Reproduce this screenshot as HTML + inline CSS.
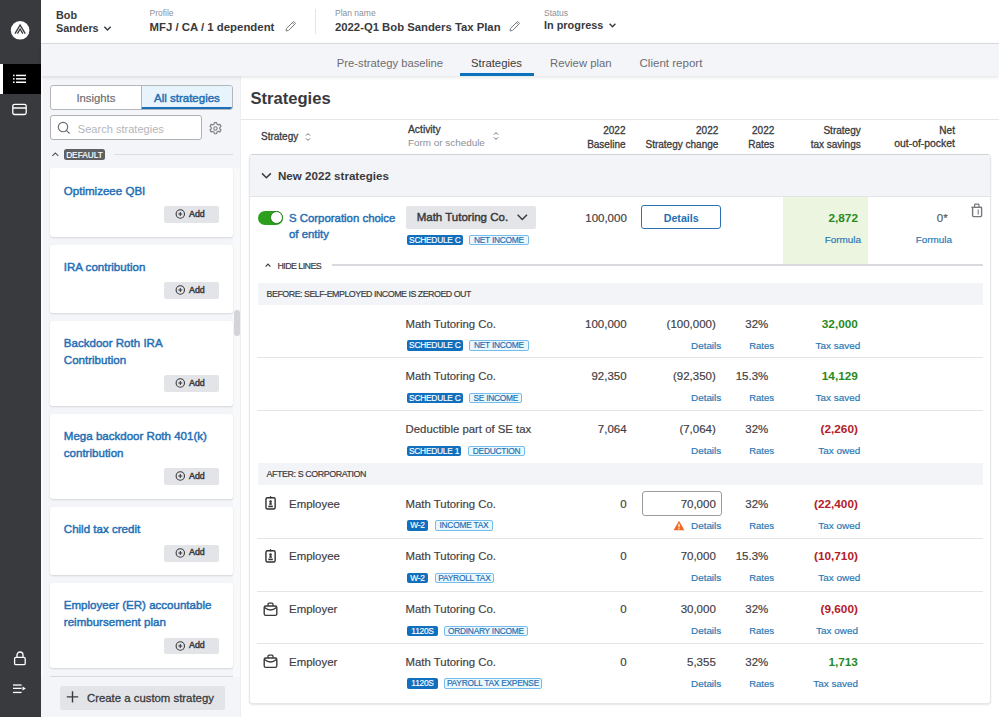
<!DOCTYPE html>
<html><head><meta charset="utf-8"><style>
html,body{margin:0;padding:0;}
body{width:999px;height:717px;overflow:hidden;position:relative;font-family:"Liberation Sans", sans-serif;}
svg{display:block;overflow:visible}
</style></head><body>
<div style="position:absolute;left:0px;top:0px;width:999px;height:717px;background:#ffffff;"></div>
<div style="position:absolute;left:0px;top:0px;width:41px;height:717px;background:#393a3d;"></div>
<svg style="position:absolute;left:10px;top:20px;" width="21" height="21" viewBox="0 0 21 21"><circle cx="10.1" cy="10.3" r="9.3" fill="#fff"/><path d="M5 13.6 L10.1 5 L15.2 13.6" fill="none" stroke="#393a3d" stroke-width="1.4"/><path d="M7.4 13.6 L10.1 9 L12.8 13.6" fill="none" stroke="#393a3d" stroke-width="1.3"/></svg>
<div style="position:absolute;left:0px;top:64px;width:41px;height:30px;background:#000;"></div>
<div style="position:absolute;left:0px;top:64px;width:3px;height:30px;background:#fff;"></div>
<svg style="position:absolute;left:12px;top:73px;" width="16" height="12" viewBox="0 0 16 12"><rect x="1" y="1.7" width="1.6" height="1.5" fill="#fff"/><rect x="4" y="1.7" width="10" height="1.5" fill="#fff"/><rect x="1" y="5.1" width="1.6" height="1.5" fill="#fff"/><rect x="4" y="5.1" width="10" height="1.5" fill="#fff"/><rect x="1" y="8.5" width="1.6" height="1.5" fill="#fff"/><rect x="4" y="8.5" width="10" height="1.5" fill="#fff"/></svg>
<svg style="position:absolute;left:11px;top:102px;" width="18" height="15" viewBox="0 0 18 15"><rect x="1.8" y="2.3" width="13.4" height="10.2" rx="1.8" fill="none" stroke="#fff" stroke-width="1.3"/><path d="M2 6 H15" stroke="#fff" stroke-width="1.5"/></svg>
<svg style="position:absolute;left:11px;top:648px;" width="18" height="20" viewBox="0 0 18 20"><path d="M6 9.5 V7 a3 3 0 0 1 6 0 V9.5" fill="none" stroke="#fff" stroke-width="1.3"/><rect x="3.6" y="9.4" width="10.6" height="7.3" rx="1.3" fill="none" stroke="#fff" stroke-width="1.3"/></svg>
<svg style="position:absolute;left:11px;top:682px;" width="18" height="14" viewBox="0 0 18 14"><rect x="2" y="2.4" width="8.6" height="1.3" fill="#fff"/><rect x="2" y="5.7" width="8.6" height="1.3" fill="#fff"/><rect x="2" y="9.8" width="8.6" height="1.3" fill="#fff"/><path d="M11.5 4.6 L14.8 6.6 L11.5 8.6 Z" fill="#fff"/></svg>
<div style="position:absolute;left:41px;top:43px;width:958px;height:1px;background:#dfe0e3;"></div>
<div style="position:absolute;left:56px;top:9.66px;font-size:10.8px;line-height:10.8px;font-weight:700;color:#393a3d;white-space:nowrap;">Bob</div>
<div style="position:absolute;left:56px;top:22.86px;font-size:10.8px;line-height:10.8px;font-weight:700;color:#393a3d;white-space:nowrap;">Sanders</div>
<svg style="position:absolute;left:102px;top:24px;" width="11" height="9" viewBox="0 0 11 9"><path d="M2.3 2.8 L5.5 6 L8.7 2.8" fill="none" stroke="#393a3d" stroke-width="1.4"/></svg>
<div style="position:absolute;left:149.5px;top:9.40px;font-size:8.5px;line-height:8.5px;font-weight:400;color:#8d9096;white-space:nowrap;">Profile</div>
<div style="position:absolute;left:149.5px;top:21.55px;font-size:11.4px;line-height:11.4px;font-weight:700;color:#393a3d;white-space:nowrap;">MFJ / CA / 1 dependent</div>
<svg style="position:absolute;left:284px;top:19px;" width="14" height="14" viewBox="0 0 14 14"><path d="M2 12 L2.6 9.4 L9.6 2.4 L11.6 4.4 L4.6 11.4 Z" fill="none" stroke="#76787d" stroke-width="0.95" stroke-linejoin="round"/><path d="M8.4 3.6 L10.4 5.6" stroke="#76787d" stroke-width="0.95"/></svg>
<div style="position:absolute;left:315px;top:9px;width:1px;height:25px;background:#e3e4e7;"></div>
<div style="position:absolute;left:335px;top:9.40px;font-size:8.5px;line-height:8.5px;font-weight:400;color:#8d9096;white-space:nowrap;">Plan name</div>
<div style="position:absolute;left:335px;top:21.63px;font-size:11.3px;line-height:11.3px;font-weight:700;color:#393a3d;white-space:nowrap;">2022-Q1 Bob Sanders Tax Plan</div>
<svg style="position:absolute;left:508px;top:19px;" width="14" height="14" viewBox="0 0 14 14"><path d="M2 12 L2.6 9.4 L9.6 2.4 L11.6 4.4 L4.6 11.4 Z" fill="none" stroke="#76787d" stroke-width="0.95" stroke-linejoin="round"/><path d="M8.4 3.6 L10.4 5.6" stroke="#76787d" stroke-width="0.95"/></svg>
<div style="position:absolute;left:544px;top:9.00px;font-size:8.5px;line-height:8.5px;font-weight:400;color:#8d9096;white-space:nowrap;">Status</div>
<div style="position:absolute;left:544px;top:19.97px;font-size:10.9px;line-height:10.9px;font-weight:700;color:#393a3d;white-space:nowrap;">In progress</div>
<svg style="position:absolute;left:607px;top:21px;" width="11" height="9" viewBox="0 0 11 9"><path d="M2.6 2.8 L5.5 5.8 L8.4 2.8" fill="none" stroke="#393a3d" stroke-width="1.4"/></svg>
<div style="position:absolute;left:41px;top:44px;width:958px;height:32px;background:#f4f5f8;box-shadow:0 1px 4px rgba(0,0,0,0.13);z-index:1"></div>
<div style="position:absolute;left:0;top:0;width:999px;height:76px;z-index:2">
<div style="position:absolute;left:336.8px;top:57.78px;font-size:11.25px;line-height:11.25px;font-weight:400;color:#6b6c72;white-space:nowrap;">Pre-strategy baseline</div>
<div style="position:absolute;left:471px;top:57.73px;font-size:11.3px;line-height:11.3px;font-weight:400;color:#393a3d;white-space:nowrap;">Strategies</div>
<div style="position:absolute;left:550px;top:57.73px;font-size:11.3px;line-height:11.3px;font-weight:400;color:#6b6c72;white-space:nowrap;">Review plan</div>
<div style="position:absolute;left:639.5px;top:57.52px;font-size:11.55px;line-height:11.55px;font-weight:400;color:#6b6c72;white-space:nowrap;">Client report</div>
<div style="position:absolute;left:460px;top:73px;width:73.5px;height:3px;background:#0d72bd;"></div>
</div>
<div style="position:absolute;left:41px;top:76px;width:200px;height:641px;background:#f4f5f8;"></div>
<div style="position:absolute;left:41px;top:76px;width:1.5px;height:641px;background:#fbfbfc;"></div>
<div style="position:absolute;left:233.4px;top:168px;width:6.8px;height:509px;background:#f8f9fa;"></div>
<div style="position:absolute;left:240.4px;top:76px;width:1px;height:641px;background:#eceef1;"></div>
<div style="position:absolute;left:50px;top:85px;width:183px;height:24.6px;background:#fff;border:1px solid #b3b6bb;border-radius:3px;box-sizing:border-box"></div>
<div style="position:absolute;left:140.6px;top:86px;width:91.4px;height:22.6px;background:#e8f4fb;border-left:1px solid #b3b6bb;border-bottom:2px solid #1b6fb6;box-sizing:border-box;border-radius:0 2px 2px 0"></div>
<div style="position:absolute;left:76.4px;top:93.03px;font-size:11.3px;line-height:11.3px;font-weight:400;color:#6b6c72;white-space:nowrap;-webkit-text-stroke:0.18px #6b6c72;">Insights</div>
<div style="position:absolute;left:154px;top:93.07px;font-size:11.5px;line-height:11.5px;font-weight:400;color:#1f6fb5;white-space:nowrap;-webkit-text-stroke:0.45px #1f6fb5;">All strategies</div>
<div style="position:absolute;left:50px;top:115px;width:152px;height:25.2px;background:#fff;border:1px solid #aeb1b6;border-radius:3px;box-sizing:border-box"></div>
<svg style="position:absolute;left:56px;top:120px;" width="16" height="16" viewBox="0 0 16 16"><circle cx="7" cy="7" r="4.7" fill="none" stroke="#6b6c72" stroke-width="1.15"/><path d="M10.4 10.4 L13.6 13.6" stroke="#6b6c72" stroke-width="1.3"/></svg>
<div style="position:absolute;left:77.8px;top:123.83px;font-size:11.07px;line-height:11.07px;font-weight:400;color:#b4b6bb;white-space:nowrap;">Search strategies</div>
<svg style="position:absolute;left:208px;top:121px;" width="15" height="15" viewBox="0 0 15 15"><circle cx="7.5" cy="7.5" r="1.7" fill="none" stroke="#7d7f84" stroke-width="1.1"/><path d="M6.4 1.6 h2.2 l0.4 1.6 l1.3 0.7 l1.6-0.5 l1.1 1.9 l-1.2 1.1 v1.5 l1.2 1.1 l-1.1 1.9 l-1.6-0.5 l-1.3 0.7 l-0.4 1.6 h-2.2 l-0.4-1.6 l-1.3-0.7 l-1.6 0.5 l-1.1-1.9 l1.2-1.1 v-1.5 l-1.2-1.1 l1.1-1.9 l1.6 0.5 l1.3-0.7 Z" fill="none" stroke="#7d7f84" stroke-width="1.15" stroke-linejoin="round"/></svg>
<svg style="position:absolute;left:50px;top:150px;" width="10" height="8" viewBox="0 0 10 8"><path d="M2.3 5.9 L5.3 3 L8.3 5.9" fill="none" stroke="#55575c" stroke-width="1.1"/></svg>
<div style="position:absolute;left:64px;top:149.2px;width:41px;height:10.6px;background:#5f6065;border-radius:2.5px"></div>
<div style="position:absolute;left:84.5px;top:150.97px;font-size:8.3px;line-height:8.3px;font-weight:400;color:#fff;white-space:nowrap;-webkit-text-stroke:0.18px #fff;transform:translateX(-50%)">DEFAULT</div>
<div style="position:absolute;left:113.6px;top:153.8px;width:119.2px;height:1px;background:#dcdde1;"></div>
<div style="position:absolute;left:50px;top:168px;width:183px;height:69px;background:#fff;border-radius:3px;box-shadow:0 1px 2px rgba(0,0,0,0.13)"></div>
<div style="position:absolute;left:63.8px;top:185.62px;font-size:11.55px;line-height:11.55px;font-weight:400;color:#1f6fb5;white-space:nowrap;-webkit-text-stroke:0.45px #1f6fb5;">Optimizeee QBI</div>
<div style="position:absolute;left:164.2px;top:206.3px;width:54.5px;height:16.8px;background:#e3e4e8;border-radius:2px"></div>
<svg style="position:absolute;left:175px;top:209.3px;" width="11" height="11" viewBox="0 0 11 11"><circle cx="5.3" cy="5" r="4.2" fill="none" stroke="#393a3d" stroke-width="1.1"/><path d="M5.3 3 V7 M3.3 5 H7.3" stroke="#393a3d" stroke-width="1.1"/></svg>
<div style="position:absolute;left:189px;top:209.67px;font-size:8.9px;line-height:8.9px;font-weight:400;color:#393a3d;white-space:nowrap;-webkit-text-stroke:0.45px #393a3d;">Add</div>
<div style="position:absolute;left:50px;top:245px;width:183px;height:68px;background:#fff;border-radius:3px;box-shadow:0 1px 2px rgba(0,0,0,0.13)"></div>
<div style="position:absolute;left:63.8px;top:261.62px;font-size:11.55px;line-height:11.55px;font-weight:400;color:#1f6fb5;white-space:nowrap;-webkit-text-stroke:0.45px #1f6fb5;">IRA contribution</div>
<div style="position:absolute;left:164.2px;top:282.3px;width:54.5px;height:16.8px;background:#e3e4e8;border-radius:2px"></div>
<svg style="position:absolute;left:175px;top:285.3px;" width="11" height="11" viewBox="0 0 11 11"><circle cx="5.3" cy="5" r="4.2" fill="none" stroke="#393a3d" stroke-width="1.1"/><path d="M5.3 3 V7 M3.3 5 H7.3" stroke="#393a3d" stroke-width="1.1"/></svg>
<div style="position:absolute;left:189px;top:285.67px;font-size:8.9px;line-height:8.9px;font-weight:400;color:#393a3d;white-space:nowrap;-webkit-text-stroke:0.45px #393a3d;">Add</div>
<div style="position:absolute;left:50px;top:321px;width:183px;height:85px;background:#fff;border-radius:3px;box-shadow:0 1px 2px rgba(0,0,0,0.13)"></div>
<div style="position:absolute;left:63.8px;top:338.22px;font-size:11.55px;line-height:11.55px;font-weight:400;color:#1f6fb5;white-space:nowrap;-webkit-text-stroke:0.45px #1f6fb5;">Backdoor Roth IRA</div>
<div style="position:absolute;left:63.8px;top:355.32px;font-size:11.55px;line-height:11.55px;font-weight:400;color:#1f6fb5;white-space:nowrap;-webkit-text-stroke:0.45px #1f6fb5;">Contribution</div>
<div style="position:absolute;left:164.2px;top:375.3px;width:54.5px;height:16.8px;background:#e3e4e8;border-radius:2px"></div>
<svg style="position:absolute;left:175px;top:378.3px;" width="11" height="11" viewBox="0 0 11 11"><circle cx="5.3" cy="5" r="4.2" fill="none" stroke="#393a3d" stroke-width="1.1"/><path d="M5.3 3 V7 M3.3 5 H7.3" stroke="#393a3d" stroke-width="1.1"/></svg>
<div style="position:absolute;left:189px;top:378.67px;font-size:8.9px;line-height:8.9px;font-weight:400;color:#393a3d;white-space:nowrap;-webkit-text-stroke:0.45px #393a3d;">Add</div>
<div style="position:absolute;left:50px;top:414px;width:183px;height:85px;background:#fff;border-radius:3px;box-shadow:0 1px 2px rgba(0,0,0,0.13)"></div>
<div style="position:absolute;left:63.8px;top:431.12px;font-size:11.55px;line-height:11.55px;font-weight:400;color:#1f6fb5;white-space:nowrap;-webkit-text-stroke:0.45px #1f6fb5;">Mega backdoor Roth 401(k)</div>
<div style="position:absolute;left:63.8px;top:448.22px;font-size:11.55px;line-height:11.55px;font-weight:400;color:#1f6fb5;white-space:nowrap;-webkit-text-stroke:0.45px #1f6fb5;">contribution</div>
<div style="position:absolute;left:164.2px;top:468.3px;width:54.5px;height:16.8px;background:#e3e4e8;border-radius:2px"></div>
<svg style="position:absolute;left:175px;top:471.3px;" width="11" height="11" viewBox="0 0 11 11"><circle cx="5.3" cy="5" r="4.2" fill="none" stroke="#393a3d" stroke-width="1.1"/><path d="M5.3 3 V7 M3.3 5 H7.3" stroke="#393a3d" stroke-width="1.1"/></svg>
<div style="position:absolute;left:189px;top:471.67px;font-size:8.9px;line-height:8.9px;font-weight:400;color:#393a3d;white-space:nowrap;-webkit-text-stroke:0.45px #393a3d;">Add</div>
<div style="position:absolute;left:50px;top:506.7px;width:183px;height:68.30000000000001px;background:#fff;border-radius:3px;box-shadow:0 1px 2px rgba(0,0,0,0.13)"></div>
<div style="position:absolute;left:63.8px;top:523.92px;font-size:11.55px;line-height:11.55px;font-weight:400;color:#1f6fb5;white-space:nowrap;-webkit-text-stroke:0.45px #1f6fb5;">Child tax credit</div>
<div style="position:absolute;left:164.2px;top:544.8px;width:54.5px;height:16.8px;background:#e3e4e8;border-radius:2px"></div>
<svg style="position:absolute;left:175px;top:547.8px;" width="11" height="11" viewBox="0 0 11 11"><circle cx="5.3" cy="5" r="4.2" fill="none" stroke="#393a3d" stroke-width="1.1"/><path d="M5.3 3 V7 M3.3 5 H7.3" stroke="#393a3d" stroke-width="1.1"/></svg>
<div style="position:absolute;left:189px;top:548.17px;font-size:8.9px;line-height:8.9px;font-weight:400;color:#393a3d;white-space:nowrap;-webkit-text-stroke:0.45px #393a3d;">Add</div>
<div style="position:absolute;left:50px;top:583.2px;width:183px;height:84.79999999999995px;background:#fff;border-radius:3px;box-shadow:0 1px 2px rgba(0,0,0,0.13)"></div>
<div style="position:absolute;left:63.8px;top:600.12px;font-size:11.55px;line-height:11.55px;font-weight:400;color:#1f6fb5;white-space:nowrap;-webkit-text-stroke:0.45px #1f6fb5;">Employeer (ER) accountable</div>
<div style="position:absolute;left:63.8px;top:617.22px;font-size:11.55px;line-height:11.55px;font-weight:400;color:#1f6fb5;white-space:nowrap;-webkit-text-stroke:0.45px #1f6fb5;">reimbursement plan</div>
<div style="position:absolute;left:164.2px;top:637.7px;width:54.5px;height:16.8px;background:#e3e4e8;border-radius:2px"></div>
<svg style="position:absolute;left:175px;top:640.7px;" width="11" height="11" viewBox="0 0 11 11"><circle cx="5.3" cy="5" r="4.2" fill="none" stroke="#393a3d" stroke-width="1.1"/><path d="M5.3 3 V7 M3.3 5 H7.3" stroke="#393a3d" stroke-width="1.1"/></svg>
<div style="position:absolute;left:189px;top:641.07px;font-size:8.9px;line-height:8.9px;font-weight:400;color:#393a3d;white-space:nowrap;-webkit-text-stroke:0.45px #393a3d;">Add</div>
<div style="position:absolute;left:50px;top:676px;width:183px;height:84px;background:#fff;border-radius:3px;box-shadow:0 1px 2px rgba(0,0,0,0.13)"></div>
<div style="position:absolute;left:63.8px;top:692.62px;font-size:11.55px;line-height:11.55px;font-weight:400;color:#1f6fb5;white-space:nowrap;-webkit-text-stroke:0.45px #1f6fb5;">Tax strategy</div>
<div style="position:absolute;left:164.2px;top:730px;width:54.5px;height:16.8px;background:#e3e4e8;border-radius:2px"></div>
<svg style="position:absolute;left:175px;top:733px;" width="11" height="11" viewBox="0 0 11 11"><circle cx="5.3" cy="5" r="4.2" fill="none" stroke="#393a3d" stroke-width="1.1"/><path d="M5.3 3 V7 M3.3 5 H7.3" stroke="#393a3d" stroke-width="1.1"/></svg>
<div style="position:absolute;left:189px;top:733.37px;font-size:8.9px;line-height:8.9px;font-weight:400;color:#393a3d;white-space:nowrap;-webkit-text-stroke:0.45px #393a3d;">Add</div>
<div style="position:absolute;left:234px;top:309.5px;width:6.4px;height:26.5px;background:#d2d4d8;border-radius:3px"></div>
<div style="position:absolute;left:41px;top:677px;width:199px;height:40px;background:#f4f5f8;"></div>
<div style="position:absolute;left:50px;top:676px;width:183px;height:1.3px;background:#d9dadf;"></div>
<div style="position:absolute;left:60px;top:685.5px;width:165px;height:24px;background:#e3e4e8;border-radius:2px"></div>
<svg style="position:absolute;left:65px;top:689px;" width="15" height="15" viewBox="0 0 15 15"><path d="M7.5 2.2 V13.6 M1.8 7.9 H13.2" stroke="#393a3d" stroke-width="1.4"/></svg>
<div style="position:absolute;left:87px;top:693.18px;font-size:11.36px;line-height:11.36px;font-weight:400;color:#393a3d;white-space:nowrap;-webkit-text-stroke:0.3px #393a3d;">Create a custom strategy</div>
<div style="position:absolute;left:250.4px;top:91.35px;font-size:16.6px;line-height:16.6px;font-weight:700;color:#393a3d;white-space:nowrap;">Strategies</div>
<div style="position:absolute;left:241px;top:118.5px;width:758px;height:1px;background:#e6e7ea;"></div>
<div style="position:absolute;left:261px;top:132.03px;font-size:10px;line-height:10px;font-weight:400;color:#393a3d;white-space:nowrap;-webkit-text-stroke:0.3px #393a3d;">Strategy</div>
<svg style="position:absolute;left:304px;top:132px;" width="8" height="10" viewBox="0 0 8 10"><path d="M2 3.6 L4 1.6 L6 3.6 M2 6.4 L4 8.4 L6 6.4" fill="none" stroke="#6b6c72" stroke-width="1"/></svg>
<div style="position:absolute;left:408px;top:124.78px;font-size:10.3px;line-height:10.3px;font-weight:400;color:#393a3d;white-space:nowrap;-webkit-text-stroke:0.3px #393a3d;">Activity</div>
<div style="position:absolute;left:408px;top:138.22px;font-size:9.9px;line-height:9.9px;font-weight:400;color:#8d9096;white-space:nowrap;">Form or schedule</div>
<svg style="position:absolute;left:492px;top:130.5px;" width="8" height="10" viewBox="0 0 8 10"><path d="M2 3.6 L4 1.6 L6 3.6 M2 6.4 L4 8.4 L6 6.4" fill="none" stroke="#6b6c72" stroke-width="1"/></svg>
<div style="position:absolute;right:373.5px;text-align:right;top:125.84px;font-size:10px;line-height:10px;font-weight:400;color:#393a3d;white-space:nowrap;-webkit-text-stroke:0.3px #393a3d;">2022</div>
<div style="position:absolute;right:373.5px;text-align:right;top:139.53px;font-size:10px;line-height:10px;font-weight:400;color:#393a3d;white-space:nowrap;-webkit-text-stroke:0.3px #393a3d;">Baseline</div>
<div style="position:absolute;right:280.70000000000005px;text-align:right;top:125.84px;font-size:10px;line-height:10px;font-weight:400;color:#393a3d;white-space:nowrap;-webkit-text-stroke:0.3px #393a3d;">2022</div>
<div style="position:absolute;right:280.70000000000005px;text-align:right;top:139.53px;font-size:10px;line-height:10px;font-weight:400;color:#393a3d;white-space:nowrap;-webkit-text-stroke:0.3px #393a3d;">Strategy change</div>
<div style="position:absolute;right:224.70000000000005px;text-align:right;top:125.84px;font-size:10px;line-height:10px;font-weight:400;color:#393a3d;white-space:nowrap;-webkit-text-stroke:0.3px #393a3d;">2022</div>
<div style="position:absolute;right:224.70000000000005px;text-align:right;top:139.53px;font-size:10px;line-height:10px;font-weight:400;color:#393a3d;white-space:nowrap;-webkit-text-stroke:0.3px #393a3d;">Rates</div>
<div style="position:absolute;right:138.29999999999995px;text-align:right;top:125.84px;font-size:10px;line-height:10px;font-weight:400;color:#393a3d;white-space:nowrap;-webkit-text-stroke:0.3px #393a3d;">Strategy</div>
<div style="position:absolute;right:138.29999999999995px;text-align:right;top:139.53px;font-size:10px;line-height:10px;font-weight:400;color:#393a3d;white-space:nowrap;-webkit-text-stroke:0.3px #393a3d;">tax savings</div>
<div style="position:absolute;right:44.10000000000002px;text-align:right;top:125.84px;font-size:10px;line-height:10px;font-weight:400;color:#393a3d;white-space:nowrap;-webkit-text-stroke:0.3px #393a3d;">Net</div>
<div style="position:absolute;right:44.10000000000002px;text-align:right;top:139.20px;font-size:10.4px;line-height:10.4px;font-weight:400;color:#393a3d;white-space:nowrap;-webkit-text-stroke:0.3px #393a3d;">out-of-pocket</div>
<div style="position:absolute;left:248.5px;top:153.8px;width:742.2px;height:549.9px;background:#fff;border:1px solid #e6e7ea;border-top:1.6px solid #d0d2d6;box-sizing:border-box;border-radius:4px;box-shadow:0 1px 2px rgba(0,0,0,0.10)"></div>
<div style="position:absolute;left:249.5px;top:155.4px;width:740.2px;height:41.2px;background:#f3f4f7;border-bottom:1px solid #e3e4e8;box-sizing:border-box"></div>
<svg style="position:absolute;left:260px;top:170px;" width="13" height="11" viewBox="0 0 13 11"><path d="M2 3.4 L6.4 7.8 L10.8 3.4" fill="none" stroke="#393a3d" stroke-width="1.5"/></svg>
<div style="position:absolute;left:278px;top:169.78px;font-size:11.6px;line-height:11.6px;font-weight:700;color:#393a3d;white-space:nowrap;">New 2022 strategies</div>
<div style="position:absolute;left:258px;top:210.5px;width:24.7px;height:14.2px;background:#2ca01c;border-radius:7.1px"></div>
<div style="position:absolute;left:269.6px;top:210.9px;width:13.2px;height:13.2px;border-radius:50%;background:#fff;border:1px solid #1e7a14;box-sizing:border-box"></div>
<div style="position:absolute;left:289px;top:212.95px;font-size:11.4px;line-height:11.4px;font-weight:400;color:#1f6fb5;white-space:nowrap;-webkit-text-stroke:0.45px #1f6fb5;">S Corporation choice</div>
<div style="position:absolute;left:289px;top:229.35px;font-size:11.4px;line-height:11.4px;font-weight:400;color:#1f6fb5;white-space:nowrap;-webkit-text-stroke:0.45px #1f6fb5;">of entity</div>
<div style="position:absolute;left:405.8px;top:205.5px;width:130px;height:23.7px;background:#e4e5e8;border-radius:2px"></div>
<div style="position:absolute;left:416.7px;top:212.27px;font-size:11.5px;line-height:11.5px;font-weight:400;color:#393a3d;white-space:nowrap;-webkit-text-stroke:0.45px #393a3d;">Math Tutoring Co.</div>
<svg style="position:absolute;left:515px;top:212px;" width="14" height="10" viewBox="0 0 14 10"><path d="M2.6 2.8 L7.3 7.5 L12 2.8" fill="none" stroke="#393a3d" stroke-width="1.5"/></svg>
<div style="position:absolute;left:406.7px;top:234.6px;width:56.3px;height:10.6px;box-sizing:border-box;border-radius:2px;background:#1070be;color:#fff;font-size:8.4px;letter-spacing:-0.25px;font-weight:400;-webkit-text-stroke:0.15px currentColor;line-height:10.6px;padding-top:0.6px;text-align:center;white-space:nowrap;display:flex;align-items:center;justify-content:center">SCHEDULE C</div>
<div style="position:absolute;left:469.29999999999995px;top:234.6px;width:59.3px;height:10.6px;box-sizing:border-box;border-radius:2px;background:#eaf7fd;color:#1c6cb0;border:1px solid #74bdea;font-size:8.4px;letter-spacing:-0.25px;font-weight:400;-webkit-text-stroke:0.15px currentColor;line-height:10.6px;padding-top:0.6px;text-align:center;white-space:nowrap;display:flex;align-items:center;justify-content:center">NET INCOME</div>
<div style="position:absolute;right:372.20000000000005px;text-align:right;top:213.07px;font-size:11.5px;line-height:11.5px;font-weight:400;color:#3f4044;white-space:nowrap;-webkit-text-stroke:0.18px #3f4044;">100,000</div>
<div style="position:absolute;left:641.3px;top:205.4px;width:80px;height:24.1px;background:#fff;border:1.5px solid #2b72b3;border-radius:3px;box-sizing:border-box"></div>
<div style="position:absolute;left:663.7px;top:212.54px;font-size:10.7px;line-height:10.7px;font-weight:700;color:#1f6fb5;white-space:nowrap;">Details</div>
<div style="position:absolute;left:782.8px;top:196.5px;width:85px;height:67.5px;background:#ebf5df;"></div>
<div style="position:absolute;right:141px;text-align:right;top:212.81px;font-size:11.8px;line-height:11.8px;font-weight:700;color:#2a8a22;white-space:nowrap;">2,872</div>
<div style="position:absolute;right:138px;text-align:right;top:234.62px;font-size:9.9px;line-height:9.9px;font-weight:400;color:#2a77b4;white-space:nowrap;-webkit-text-stroke:0.18px #2a77b4;">Formula</div>
<div style="position:absolute;right:51.39999999999998px;text-align:right;top:213.07px;font-size:11.5px;line-height:11.5px;font-weight:400;color:#55575c;white-space:nowrap;-webkit-text-stroke:0.18px #55575c;">0*</div>
<div style="position:absolute;right:47px;text-align:right;top:235.42px;font-size:9.9px;line-height:9.9px;font-weight:400;color:#2a77b4;white-space:nowrap;-webkit-text-stroke:0.18px #2a77b4;">Formula</div>
<svg style="position:absolute;left:969px;top:202px;" width="16" height="17" viewBox="0 0 16 17"><path d="M2.4 5.3 H13" stroke="#76787d" stroke-width="1.4"/><path d="M5.6 5 V3 a0.8 0.8 0 0 1 0.8-0.8 h2.8 a0.8 0.8 0 0 1 0.8 0.8 V5" fill="none" stroke="#76787d" stroke-width="1.2"/><path d="M3.6 5.4 V13.6 a1 1 0 0 0 1 1 h7 a1 1 0 0 0 1-1 V5.4" fill="none" stroke="#76787d" stroke-width="1.4"/><path d="M9.2 7.6 V12.4" stroke="#76787d" stroke-width="1.1"/></svg>
<svg style="position:absolute;left:263px;top:261px;" width="10" height="8" viewBox="0 0 10 8"><path d="M2.6 5.6 L5 3.2 L7.4 5.6" fill="none" stroke="#393a3d" stroke-width="1.2"/></svg>
<div style="position:absolute;left:277.4px;top:261.57px;font-size:8.9px;line-height:8.9px;font-weight:400;color:#393a3d;white-space:nowrap;-webkit-text-stroke:0.18px #393a3d;letter-spacing:-0.55px">HIDE LINES</div>
<div style="position:absolute;left:331.5px;top:264px;width:651px;height:2px;background:#d9dadd;"></div>
<div style="position:absolute;left:258px;top:283px;width:724.5px;height:22px;background:#f3f4f7;"></div>
<div style="position:absolute;left:266.6px;top:289.97px;font-size:8.9px;line-height:8.9px;font-weight:400;color:#393a3d;white-space:nowrap;-webkit-text-stroke:0.18px #393a3d;letter-spacing:-0.5px">BEFORE: SELF-EMPLOYED INCOME IS ZEROED OUT</div>
<div style="position:absolute;left:405.6px;top:318.98px;font-size:11.37px;line-height:11.37px;font-weight:400;color:#3f4044;white-space:nowrap;-webkit-text-stroke:0.18px #3f4044;">Math Tutoring Co.</div>
<div style="position:absolute;left:406.7px;top:340px;width:56.3px;height:10.6px;box-sizing:border-box;border-radius:2px;background:#1070be;color:#fff;font-size:8.4px;letter-spacing:-0.25px;font-weight:400;-webkit-text-stroke:0.15px currentColor;line-height:10.6px;padding-top:0.6px;text-align:center;white-space:nowrap;display:flex;align-items:center;justify-content:center">SCHEDULE C</div>
<div style="position:absolute;left:469.29999999999995px;top:340px;width:59.3px;height:10.6px;box-sizing:border-box;border-radius:2px;background:#eaf7fd;color:#1c6cb0;border:1px solid #74bdea;font-size:8.4px;letter-spacing:-0.25px;font-weight:400;-webkit-text-stroke:0.15px currentColor;line-height:10.6px;padding-top:0.6px;text-align:center;white-space:nowrap;display:flex;align-items:center;justify-content:center">NET INCOME</div>
<div style="position:absolute;right:372.4px;text-align:right;top:318.87px;font-size:11.5px;line-height:11.5px;font-weight:400;color:#3f4044;white-space:nowrap;-webkit-text-stroke:0.18px #3f4044;">100,000</div>
<div style="position:absolute;right:283.20000000000005px;text-align:right;top:318.87px;font-size:11.5px;line-height:11.5px;font-weight:400;color:#3f4044;white-space:nowrap;-webkit-text-stroke:0.18px #3f4044;">(100,000)</div>
<div style="position:absolute;right:277.79999999999995px;text-align:right;top:340.62px;font-size:9.9px;line-height:9.9px;font-weight:400;color:#2a77b4;white-space:nowrap;-webkit-text-stroke:0.18px #2a77b4;">Details</div>
<div style="position:absolute;right:230.70000000000005px;text-align:right;top:318.87px;font-size:11.5px;line-height:11.5px;font-weight:400;color:#3f4044;white-space:nowrap;-webkit-text-stroke:0.18px #3f4044;">32%</div>
<div style="position:absolute;right:225px;text-align:right;top:340.96px;font-size:9.5px;line-height:9.5px;font-weight:400;color:#2a77b4;white-space:nowrap;-webkit-text-stroke:0.18px #2a77b4;">Rates</div>
<div style="position:absolute;right:141.10000000000002px;text-align:right;top:318.61px;font-size:11.8px;line-height:11.8px;font-weight:700;color:#2a8a22;white-space:nowrap;">32,000</div>
<div style="position:absolute;right:138.70000000000005px;text-align:right;top:340.58px;font-size:9.95px;line-height:9.95px;font-weight:400;color:#2a77b4;white-space:nowrap;-webkit-text-stroke:0.18px #2a77b4;">Tax saved</div>
<div style="position:absolute;left:257px;top:357px;width:725.5px;height:1px;background:#e3e4e8;"></div>
<div style="position:absolute;left:405.6px;top:371.48px;font-size:11.37px;line-height:11.37px;font-weight:400;color:#3f4044;white-space:nowrap;-webkit-text-stroke:0.18px #3f4044;">Math Tutoring Co.</div>
<div style="position:absolute;left:406.7px;top:392.5px;width:56.3px;height:10.6px;box-sizing:border-box;border-radius:2px;background:#1070be;color:#fff;font-size:8.4px;letter-spacing:-0.25px;font-weight:400;-webkit-text-stroke:0.15px currentColor;line-height:10.6px;padding-top:0.6px;text-align:center;white-space:nowrap;display:flex;align-items:center;justify-content:center">SCHEDULE C</div>
<div style="position:absolute;left:469.29999999999995px;top:392.5px;width:53px;height:10.6px;box-sizing:border-box;border-radius:2px;background:#eaf7fd;color:#1c6cb0;border:1px solid #74bdea;font-size:8.4px;letter-spacing:-0.25px;font-weight:400;-webkit-text-stroke:0.15px currentColor;line-height:10.6px;padding-top:0.6px;text-align:center;white-space:nowrap;display:flex;align-items:center;justify-content:center">SE INCOME</div>
<div style="position:absolute;right:372.4px;text-align:right;top:371.37px;font-size:11.5px;line-height:11.5px;font-weight:400;color:#3f4044;white-space:nowrap;-webkit-text-stroke:0.18px #3f4044;">92,350</div>
<div style="position:absolute;right:283.20000000000005px;text-align:right;top:371.37px;font-size:11.5px;line-height:11.5px;font-weight:400;color:#3f4044;white-space:nowrap;-webkit-text-stroke:0.18px #3f4044;">(92,350)</div>
<div style="position:absolute;right:277.79999999999995px;text-align:right;top:393.12px;font-size:9.9px;line-height:9.9px;font-weight:400;color:#2a77b4;white-space:nowrap;-webkit-text-stroke:0.18px #2a77b4;">Details</div>
<div style="position:absolute;right:230.70000000000005px;text-align:right;top:371.37px;font-size:11.5px;line-height:11.5px;font-weight:400;color:#3f4044;white-space:nowrap;-webkit-text-stroke:0.18px #3f4044;">15.3%</div>
<div style="position:absolute;right:225px;text-align:right;top:393.46px;font-size:9.5px;line-height:9.5px;font-weight:400;color:#2a77b4;white-space:nowrap;-webkit-text-stroke:0.18px #2a77b4;">Rates</div>
<div style="position:absolute;right:141.10000000000002px;text-align:right;top:371.11px;font-size:11.8px;line-height:11.8px;font-weight:700;color:#2a8a22;white-space:nowrap;">14,129</div>
<div style="position:absolute;right:138.70000000000005px;text-align:right;top:393.08px;font-size:9.95px;line-height:9.95px;font-weight:400;color:#2a77b4;white-space:nowrap;-webkit-text-stroke:0.18px #2a77b4;">Tax saved</div>
<div style="position:absolute;left:257px;top:410.3px;width:725.5px;height:1px;background:#e3e4e8;"></div>
<div style="position:absolute;left:405.6px;top:424.48px;font-size:11.37px;line-height:11.37px;font-weight:400;color:#3f4044;white-space:nowrap;-webkit-text-stroke:0.18px #3f4044;">Deductible part of SE tax</div>
<div style="position:absolute;left:406.7px;top:445.5px;width:54.7px;height:10.6px;box-sizing:border-box;border-radius:2px;background:#1070be;color:#fff;font-size:8.4px;letter-spacing:-0.25px;font-weight:400;-webkit-text-stroke:0.15px currentColor;line-height:10.6px;padding-top:0.6px;text-align:center;white-space:nowrap;display:flex;align-items:center;justify-content:center">SCHEDULE 1</div>
<div style="position:absolute;left:467.7px;top:445.5px;width:57.7px;height:10.6px;box-sizing:border-box;border-radius:2px;background:#eaf7fd;color:#1c6cb0;border:1px solid #74bdea;font-size:8.4px;letter-spacing:-0.25px;font-weight:400;-webkit-text-stroke:0.15px currentColor;line-height:10.6px;padding-top:0.6px;text-align:center;white-space:nowrap;display:flex;align-items:center;justify-content:center">DEDUCTION</div>
<div style="position:absolute;right:372.4px;text-align:right;top:424.37px;font-size:11.5px;line-height:11.5px;font-weight:400;color:#3f4044;white-space:nowrap;-webkit-text-stroke:0.18px #3f4044;">7,064</div>
<div style="position:absolute;right:283.20000000000005px;text-align:right;top:424.37px;font-size:11.5px;line-height:11.5px;font-weight:400;color:#3f4044;white-space:nowrap;-webkit-text-stroke:0.18px #3f4044;">(7,064)</div>
<div style="position:absolute;right:277.79999999999995px;text-align:right;top:446.12px;font-size:9.9px;line-height:9.9px;font-weight:400;color:#2a77b4;white-space:nowrap;-webkit-text-stroke:0.18px #2a77b4;">Details</div>
<div style="position:absolute;right:230.70000000000005px;text-align:right;top:424.37px;font-size:11.5px;line-height:11.5px;font-weight:400;color:#3f4044;white-space:nowrap;-webkit-text-stroke:0.18px #3f4044;">32%</div>
<div style="position:absolute;right:225px;text-align:right;top:446.46px;font-size:9.5px;line-height:9.5px;font-weight:400;color:#2a77b4;white-space:nowrap;-webkit-text-stroke:0.18px #2a77b4;">Rates</div>
<div style="position:absolute;right:141.10000000000002px;text-align:right;top:424.11px;font-size:11.8px;line-height:11.8px;font-weight:700;color:#b3202a;white-space:nowrap;">(2,260)</div>
<div style="position:absolute;right:138.70000000000005px;text-align:right;top:446.08px;font-size:9.95px;line-height:9.95px;font-weight:400;color:#2a77b4;white-space:nowrap;-webkit-text-stroke:0.18px #2a77b4;">Tax owed</div>
<div style="position:absolute;left:258px;top:463px;width:724.5px;height:22px;background:#f3f4f7;"></div>
<div style="position:absolute;left:266.6px;top:469.97px;font-size:8.9px;line-height:8.9px;font-weight:400;color:#393a3d;white-space:nowrap;-webkit-text-stroke:0.18px #393a3d;letter-spacing:-0.42px">AFTER: S CORPORATION</div>
<div style="position:absolute;left:289px;top:498.91px;font-size:11.45px;line-height:11.45px;font-weight:400;color:#3f4044;white-space:nowrap;-webkit-text-stroke:0.18px #3f4044;">Employee</div>
<svg style="position:absolute;left:263px;top:495px;" width="16" height="17" viewBox="0 0 16 17"><rect x="2.95" y="2.75" width="9.2" height="11.3" rx="1.5" fill="none" stroke="#2f3033" stroke-width="1.4"/><path d="M7.55 1.2 V3.4" stroke="#2f3033" stroke-width="1.3"/><circle cx="7.55" cy="6.5" r="1.25" fill="#2f3033"/><path d="M6.1 9.8 L6.7 7.6 H8.4 L9 9.8 Z" fill="#2f3033"/><rect x="5.3" y="10.6" width="4.5" height="1.6" fill="#2f3033"/></svg>
<div style="position:absolute;left:405.6px;top:498.98px;font-size:11.37px;line-height:11.37px;font-weight:400;color:#3f4044;white-space:nowrap;-webkit-text-stroke:0.18px #3f4044;">Math Tutoring Co.</div>
<div style="position:absolute;left:406.7px;top:520px;width:21.6px;height:10.6px;box-sizing:border-box;border-radius:2px;background:#1070be;color:#fff;font-size:8.4px;letter-spacing:-0.25px;font-weight:400;-webkit-text-stroke:0.15px currentColor;line-height:10.6px;padding-top:0.6px;text-align:center;white-space:nowrap;display:flex;align-items:center;justify-content:center">W-2</div>
<div style="position:absolute;left:434.59999999999997px;top:520px;width:58.6px;height:10.6px;box-sizing:border-box;border-radius:2px;background:#eaf7fd;color:#1c6cb0;border:1px solid #74bdea;font-size:8.4px;letter-spacing:-0.25px;font-weight:400;-webkit-text-stroke:0.15px currentColor;line-height:10.6px;padding-top:0.6px;text-align:center;white-space:nowrap;display:flex;align-items:center;justify-content:center">INCOME TAX</div>
<div style="position:absolute;right:372.4px;text-align:right;top:498.87px;font-size:11.5px;line-height:11.5px;font-weight:400;color:#3f4044;white-space:nowrap;-webkit-text-stroke:0.18px #3f4044;">0</div>
<div style="position:absolute;left:641.5px;top:491.2px;width:80px;height:24.4px;background:#fff;border:1px solid #9a9ca1;border-radius:3px;box-sizing:border-box"></div>
<div style="position:absolute;right:283.20000000000005px;text-align:right;top:498.87px;font-size:11.5px;line-height:11.5px;font-weight:400;color:#3f4044;white-space:nowrap;-webkit-text-stroke:0.18px #3f4044;">70,000</div>
<svg style="position:absolute;left:673px;top:520px;" width="12" height="11" viewBox="0 0 12 11"><path d="M6 0.8 L11.4 10.2 H0.6 Z" fill="#ef6a1e"/><rect x="5.4" y="3.8" width="1.2" height="3.6" fill="#fff"/><rect x="5.4" y="8.2" width="1.2" height="1.2" fill="#fff"/></svg>
<div style="position:absolute;right:277.79999999999995px;text-align:right;top:520.62px;font-size:9.9px;line-height:9.9px;font-weight:400;color:#2a77b4;white-space:nowrap;-webkit-text-stroke:0.18px #2a77b4;">Details</div>
<div style="position:absolute;right:230.70000000000005px;text-align:right;top:498.87px;font-size:11.5px;line-height:11.5px;font-weight:400;color:#3f4044;white-space:nowrap;-webkit-text-stroke:0.18px #3f4044;">32%</div>
<div style="position:absolute;right:225px;text-align:right;top:520.96px;font-size:9.5px;line-height:9.5px;font-weight:400;color:#2a77b4;white-space:nowrap;-webkit-text-stroke:0.18px #2a77b4;">Rates</div>
<div style="position:absolute;right:141.10000000000002px;text-align:right;top:498.61px;font-size:11.8px;line-height:11.8px;font-weight:700;color:#b3202a;white-space:nowrap;">(22,400)</div>
<div style="position:absolute;right:138.70000000000005px;text-align:right;top:520.58px;font-size:9.95px;line-height:9.95px;font-weight:400;color:#2a77b4;white-space:nowrap;-webkit-text-stroke:0.18px #2a77b4;">Tax owed</div>
<div style="position:absolute;left:257px;top:537.5px;width:725.5px;height:1px;background:#e3e4e8;"></div>
<div style="position:absolute;left:289px;top:551.41px;font-size:11.45px;line-height:11.45px;font-weight:400;color:#3f4044;white-space:nowrap;-webkit-text-stroke:0.18px #3f4044;">Employee</div>
<svg style="position:absolute;left:263px;top:547.5px;" width="16" height="17" viewBox="0 0 16 17"><rect x="2.95" y="2.75" width="9.2" height="11.3" rx="1.5" fill="none" stroke="#2f3033" stroke-width="1.4"/><path d="M7.55 1.2 V3.4" stroke="#2f3033" stroke-width="1.3"/><circle cx="7.55" cy="6.5" r="1.25" fill="#2f3033"/><path d="M6.1 9.8 L6.7 7.6 H8.4 L9 9.8 Z" fill="#2f3033"/><rect x="5.3" y="10.6" width="4.5" height="1.6" fill="#2f3033"/></svg>
<div style="position:absolute;left:405.6px;top:551.48px;font-size:11.37px;line-height:11.37px;font-weight:400;color:#3f4044;white-space:nowrap;-webkit-text-stroke:0.18px #3f4044;">Math Tutoring Co.</div>
<div style="position:absolute;left:406.7px;top:572.5px;width:21.6px;height:10.6px;box-sizing:border-box;border-radius:2px;background:#1070be;color:#fff;font-size:8.4px;letter-spacing:-0.25px;font-weight:400;-webkit-text-stroke:0.15px currentColor;line-height:10.6px;padding-top:0.6px;text-align:center;white-space:nowrap;display:flex;align-items:center;justify-content:center">W-2</div>
<div style="position:absolute;left:434.59999999999997px;top:572.5px;width:59.7px;height:10.6px;box-sizing:border-box;border-radius:2px;background:#eaf7fd;color:#1c6cb0;border:1px solid #74bdea;font-size:8.4px;letter-spacing:-0.25px;font-weight:400;-webkit-text-stroke:0.15px currentColor;line-height:10.6px;padding-top:0.6px;text-align:center;white-space:nowrap;display:flex;align-items:center;justify-content:center">PAYROLL TAX</div>
<div style="position:absolute;right:372.4px;text-align:right;top:551.37px;font-size:11.5px;line-height:11.5px;font-weight:400;color:#3f4044;white-space:nowrap;-webkit-text-stroke:0.18px #3f4044;">0</div>
<div style="position:absolute;right:283.20000000000005px;text-align:right;top:551.37px;font-size:11.5px;line-height:11.5px;font-weight:400;color:#3f4044;white-space:nowrap;-webkit-text-stroke:0.18px #3f4044;">70,000</div>
<div style="position:absolute;right:277.79999999999995px;text-align:right;top:573.12px;font-size:9.9px;line-height:9.9px;font-weight:400;color:#2a77b4;white-space:nowrap;-webkit-text-stroke:0.18px #2a77b4;">Details</div>
<div style="position:absolute;right:230.70000000000005px;text-align:right;top:551.37px;font-size:11.5px;line-height:11.5px;font-weight:400;color:#3f4044;white-space:nowrap;-webkit-text-stroke:0.18px #3f4044;">15.3%</div>
<div style="position:absolute;right:225px;text-align:right;top:573.46px;font-size:9.5px;line-height:9.5px;font-weight:400;color:#2a77b4;white-space:nowrap;-webkit-text-stroke:0.18px #2a77b4;">Rates</div>
<div style="position:absolute;right:141.10000000000002px;text-align:right;top:551.11px;font-size:11.8px;line-height:11.8px;font-weight:700;color:#b3202a;white-space:nowrap;">(10,710)</div>
<div style="position:absolute;right:138.70000000000005px;text-align:right;top:573.08px;font-size:9.95px;line-height:9.95px;font-weight:400;color:#2a77b4;white-space:nowrap;-webkit-text-stroke:0.18px #2a77b4;">Tax owed</div>
<div style="position:absolute;left:257px;top:590.5px;width:725.5px;height:1px;background:#e3e4e8;"></div>
<div style="position:absolute;left:289px;top:604.41px;font-size:11.45px;line-height:11.45px;font-weight:400;color:#3f4044;white-space:nowrap;-webkit-text-stroke:0.18px #3f4044;">Employer</div>
<svg style="position:absolute;left:262px;top:600.5px;" width="17" height="16" viewBox="0 0 17 16"><rect x="2.2" y="5" width="12.6" height="9.4" rx="1.6" fill="none" stroke="#393a3d" stroke-width="1.4"/><path d="M6 5 V3.2 a1 1 0 0 1 1-1 h3 a1 1 0 0 1 1 1 V5" fill="none" stroke="#393a3d" stroke-width="1.3"/><path d="M2.6 6.4 Q8.5 11.6 14.4 6.4" fill="none" stroke="#393a3d" stroke-width="1.3"/></svg>
<div style="position:absolute;left:405.6px;top:604.48px;font-size:11.37px;line-height:11.37px;font-weight:400;color:#3f4044;white-space:nowrap;-webkit-text-stroke:0.18px #3f4044;">Math Tutoring Co.</div>
<div style="position:absolute;left:406.7px;top:625.5px;width:31.7px;height:10.6px;box-sizing:border-box;border-radius:2px;background:#1070be;color:#fff;font-size:8.4px;letter-spacing:-0.25px;font-weight:400;-webkit-text-stroke:0.15px currentColor;line-height:10.6px;padding-top:0.6px;text-align:center;white-space:nowrap;display:flex;align-items:center;justify-content:center">1120S</div>
<div style="position:absolute;left:444.09999999999997px;top:625.5px;width:83.6px;height:10.6px;box-sizing:border-box;border-radius:2px;background:#eaf7fd;color:#1c6cb0;border:1px solid #74bdea;font-size:8.4px;letter-spacing:-0.25px;font-weight:400;-webkit-text-stroke:0.15px currentColor;line-height:10.6px;padding-top:0.6px;text-align:center;white-space:nowrap;display:flex;align-items:center;justify-content:center">ORDINARY INCOME</div>
<div style="position:absolute;right:372.4px;text-align:right;top:604.37px;font-size:11.5px;line-height:11.5px;font-weight:400;color:#3f4044;white-space:nowrap;-webkit-text-stroke:0.18px #3f4044;">0</div>
<div style="position:absolute;right:283.20000000000005px;text-align:right;top:604.37px;font-size:11.5px;line-height:11.5px;font-weight:400;color:#3f4044;white-space:nowrap;-webkit-text-stroke:0.18px #3f4044;">30,000</div>
<div style="position:absolute;right:277.79999999999995px;text-align:right;top:626.12px;font-size:9.9px;line-height:9.9px;font-weight:400;color:#2a77b4;white-space:nowrap;-webkit-text-stroke:0.18px #2a77b4;">Details</div>
<div style="position:absolute;right:230.70000000000005px;text-align:right;top:604.37px;font-size:11.5px;line-height:11.5px;font-weight:400;color:#3f4044;white-space:nowrap;-webkit-text-stroke:0.18px #3f4044;">32%</div>
<div style="position:absolute;right:225px;text-align:right;top:626.46px;font-size:9.5px;line-height:9.5px;font-weight:400;color:#2a77b4;white-space:nowrap;-webkit-text-stroke:0.18px #2a77b4;">Rates</div>
<div style="position:absolute;right:141.10000000000002px;text-align:right;top:604.11px;font-size:11.8px;line-height:11.8px;font-weight:700;color:#b3202a;white-space:nowrap;">(9,600)</div>
<div style="position:absolute;right:141px;text-align:right;top:626.08px;font-size:9.95px;line-height:9.95px;font-weight:400;color:#2a77b4;white-space:nowrap;-webkit-text-stroke:0.18px #2a77b4;">Tax owed</div>
<div style="position:absolute;left:257px;top:643.2px;width:725.5px;height:1px;background:#e3e4e8;"></div>
<div style="position:absolute;left:289px;top:657.11px;font-size:11.45px;line-height:11.45px;font-weight:400;color:#3f4044;white-space:nowrap;-webkit-text-stroke:0.18px #3f4044;">Employer</div>
<svg style="position:absolute;left:262px;top:653.2px;" width="17" height="16" viewBox="0 0 17 16"><rect x="2.2" y="5" width="12.6" height="9.4" rx="1.6" fill="none" stroke="#393a3d" stroke-width="1.4"/><path d="M6 5 V3.2 a1 1 0 0 1 1-1 h3 a1 1 0 0 1 1 1 V5" fill="none" stroke="#393a3d" stroke-width="1.3"/><path d="M2.6 6.4 Q8.5 11.6 14.4 6.4" fill="none" stroke="#393a3d" stroke-width="1.3"/></svg>
<div style="position:absolute;left:405.6px;top:657.18px;font-size:11.37px;line-height:11.37px;font-weight:400;color:#3f4044;white-space:nowrap;-webkit-text-stroke:0.18px #3f4044;">Math Tutoring Co.</div>
<div style="position:absolute;left:406.7px;top:678.2px;width:31.7px;height:10.6px;box-sizing:border-box;border-radius:2px;background:#1070be;color:#fff;font-size:8.4px;letter-spacing:-0.25px;font-weight:400;-webkit-text-stroke:0.15px currentColor;line-height:10.6px;padding-top:0.6px;text-align:center;white-space:nowrap;display:flex;align-items:center;justify-content:center">1120S</div>
<div style="position:absolute;left:444.09999999999997px;top:678.2px;width:97.7px;height:10.6px;box-sizing:border-box;border-radius:2px;background:#eaf7fd;color:#1c6cb0;border:1px solid #74bdea;font-size:8.4px;letter-spacing:-0.25px;font-weight:400;-webkit-text-stroke:0.15px currentColor;line-height:10.6px;padding-top:0.6px;text-align:center;white-space:nowrap;display:flex;align-items:center;justify-content:center">PAYROLL TAX EXPENSE</div>
<div style="position:absolute;right:372.4px;text-align:right;top:657.07px;font-size:11.5px;line-height:11.5px;font-weight:400;color:#3f4044;white-space:nowrap;-webkit-text-stroke:0.18px #3f4044;">0</div>
<div style="position:absolute;right:283.20000000000005px;text-align:right;top:657.07px;font-size:11.5px;line-height:11.5px;font-weight:400;color:#3f4044;white-space:nowrap;-webkit-text-stroke:0.18px #3f4044;">5,355</div>
<div style="position:absolute;right:277.79999999999995px;text-align:right;top:678.82px;font-size:9.9px;line-height:9.9px;font-weight:400;color:#2a77b4;white-space:nowrap;-webkit-text-stroke:0.18px #2a77b4;">Details</div>
<div style="position:absolute;right:230.70000000000005px;text-align:right;top:657.07px;font-size:11.5px;line-height:11.5px;font-weight:400;color:#3f4044;white-space:nowrap;-webkit-text-stroke:0.18px #3f4044;">32%</div>
<div style="position:absolute;right:225px;text-align:right;top:679.16px;font-size:9.5px;line-height:9.5px;font-weight:400;color:#2a77b4;white-space:nowrap;-webkit-text-stroke:0.18px #2a77b4;">Rates</div>
<div style="position:absolute;right:141.10000000000002px;text-align:right;top:656.81px;font-size:11.8px;line-height:11.8px;font-weight:700;color:#2a8a22;white-space:nowrap;">1,713</div>
<div style="position:absolute;right:141px;text-align:right;top:678.78px;font-size:9.95px;line-height:9.95px;font-weight:400;color:#2a77b4;white-space:nowrap;-webkit-text-stroke:0.18px #2a77b4;">Tax saved</div>
</body></html>
